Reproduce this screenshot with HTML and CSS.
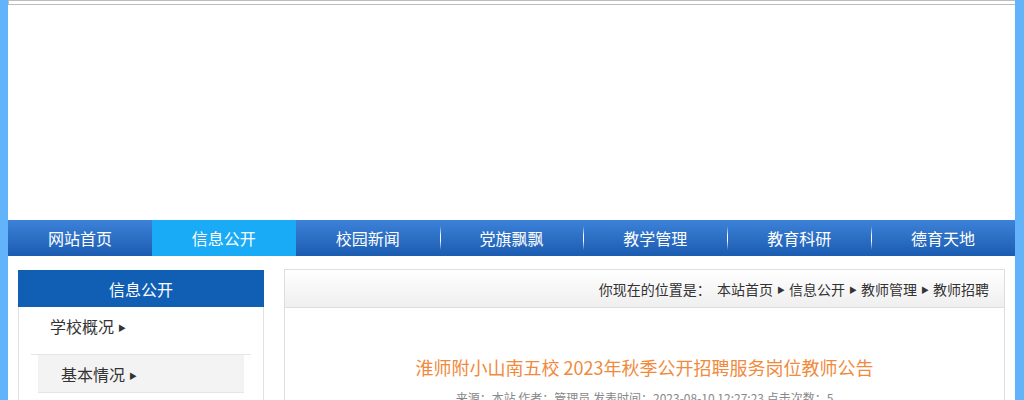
FILE: index.html
```html
<!DOCTYPE html>
<html>
<head>
    <meta charset="utf-8">
    <title>信息公开 - 教师招聘</title>
    <link rel="stylesheet" href="styles.css">
</head>
<body>
    <div class="page">
        <div class="header">
            <div class="top-strip"></div>
        </div>
        <ul class="nav">
            <li><a href="#">网站首页</a></li>
            <li class="active"><a href="#">信息公开</a></li>
            <li><a href="#">校园新闻</a></li>
            <li class="sep"><a href="#">党旗飘飘</a></li>
            <li class="sep"><a href="#">教学管理</a></li>
            <li class="sep"><a href="#">教育科研</a></li>
            <li class="sep"><a href="#">德育天地</a></li>
        </ul>
        <div class="main">
            <div class="sidebar">
                <div class="side-title">信息公开</div>
                <ul class="side-menu">
                    <li class="side-item"><a href="#">学校概况<span class="arr">▶</span></a></li>
                    <li class="side-sub"><a href="#">基本情况<span class="arr">▶</span></a></li>
                </ul>
            </div>
            <div class="content">
                <div class="crumb">
                    <span>你现在的位置是：&nbsp; 本站首页<span class="arr">▶</span>信息公开<span class="arr">▶</span>教师管理<span class="arr">▶</span>教师招聘</span>
                </div>
                <div class="article">
                    <h1 class="art-title">淮师附小山南五校 2023年秋季公开招聘服务岗位教师公告</h1>
                    <div class="art-meta">来源：本站 作者：管理员 发表时间：2023-08-10 12:27:23 点击次数：5</div>
                </div>
            </div>
        </div>
    </div>
</body>
</html>
```

FILE: styles.css
```css
* {
    box-sizing: border-box;
}

body {
    margin: 0;
    padding: 0 9px 0 8px;
    background-color: #62b3f9;
    font-family: "Noto Sans CJK SC", "Noto Sans", sans-serif;
    color: #333;
}

a {
    color: inherit;
    text-decoration: none;
}

ul {
    list-style: none;
    margin: 0;
    padding: 0;
}

.page {
    background-color: #fff;
    height: 400px;
    overflow: hidden;
}

.header {
    height: 220px;
}

.top-strip {
    height: 5px;
    border-top: 1px solid #bdbdbd;
    border-bottom: 1px solid #bdbdbd;
    border-left: 1px solid #bdbdbd;
}

.nav {
    display: grid;
    grid-template-columns: repeat(7, 1fr);
    height: 36px;
    background: linear-gradient(#3c82d8, #1b5cb1);
}

.nav li {
    position: relative;
    display: flex;
    align-items: center;
    justify-content: center;
    color: #fff;
    font-size: 16px;
}

.nav li.active {
    background-color: #1aabf6;
}

.nav li.sep::before {
    content: '';
    position: absolute;
    left: 0;
    top: 6px;
    width: 1px;
    height: 24px;
    background: linear-gradient(rgba(255,255,255,0), #fff 40%, #fff 60%, rgba(255,255,255,0));
}

.main {
    display: flex;
    gap: 20px;
    padding: 14px 10px 0 10px;
}

.sidebar {
    width: 246px;
    height: 200px;
    border: 1px solid #e1e1e1;
    border-top: none;
}

.side-title {
    height: 37px;
    margin: 0 -1px;
    background-color: #115fb5;
    color: #fff;
    font-size: 16px;
    display: flex;
    align-items: center;
    justify-content: center;
}

.side-menu {
    padding: 0 12px;
}

.side-item {
    height: 48px;
    padding: 0 0 10px 19px;
    display: flex;
    align-items: center;
    font-size: 16px;
    border-bottom: 1px solid #e6e6e6;
}

.side-sub {
    height: 38px;
    margin: 0 7px;
    padding-left: 23px;
    display: flex;
    align-items: center;
    font-size: 16px;
    background-color: #f3f3f3;
    border-bottom: 1px solid #e6e6e6;
}

.arr {
    font-size: 8px;
    margin-left: 4px;
    vertical-align: 2px;
}

.content {
    flex: 1;
    height: 200px;
    border: 1px solid #dedede;
    margin-top: -1px;
}

.crumb {
    height: 38px;
    display: flex;
    align-items: center;
    justify-content: flex-end;
    padding-right: 15px;
    font-size: 14px;
    color: #333;
    background: linear-gradient(#fff, #efefef);
    border-bottom: 1px solid #dedede;
    white-space: nowrap;
}

.crumb .arr {
    font-size: 8px;
    margin: 0 4px;
    vertical-align: 2px;
}

.article {
    padding-top: 46px;
    text-align: center;
}

.art-title {
    margin: 0;
    font-size: 18px;
    font-weight: normal;
    color: #f08a3c;
    line-height: 26px;
}

.art-meta {
    margin-top: 9px;
    font-size: 12px;
    color: #888;
}
```
